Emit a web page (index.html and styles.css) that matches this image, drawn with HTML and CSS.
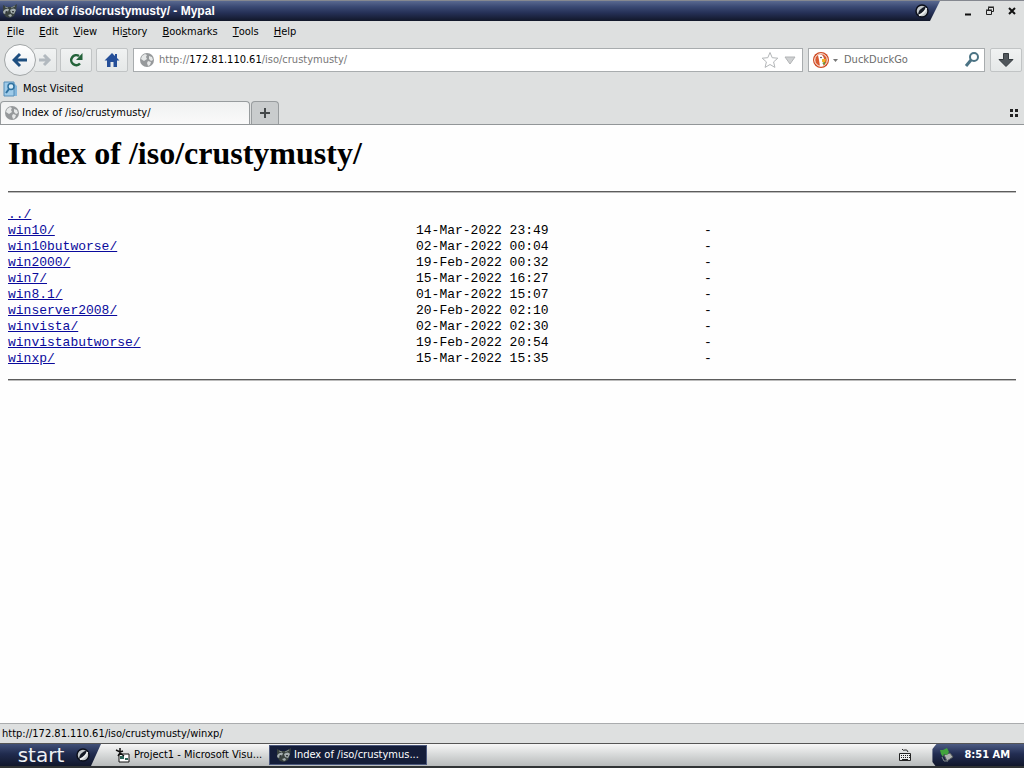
FILE: index.html
```html
<!DOCTYPE html>
<html lang="en">
<head>
<meta charset="utf-8">
<title>Index of /iso/crustymusty/ - Mypal</title>
<link rel="stylesheet" href="styles.css">
</head>
<body>
<svg width="0" height="0" class="defs" aria-hidden="true">
  <defs>
    <symbol id="globe" viewBox="0 0 16 16">
      <circle cx="8" cy="8" r="7" fill="#96999b"/>
      <path d="M3 4l3-2 2 1-1 2 1 2-3 2-3-2zM10 4l3 1 1 3-2 1-2-2zM9 9l3 1-1 3-2 1-1-3z" fill="#e6e8e8"/>
    </symbol>
    <symbol id="raccoon" viewBox="0 0 16 16">
      <path d="M1 2l4 2h5l5-3-1 7-2 5-4 2-4-1-3-4z" fill="#39423f"/>
      <path d="M1 9q2-4 6-3l-1 3-4 2zM8 7q4-3 6 0l-2 4-3-1zM6 12l3-1 1 2-2 1z" fill="#a5aeb0"/>
      <path d="M3 9l2-1 1 1-2 1zM10 8l2 0-1 2z" fill="#15191b"/>
      <path d="M3 4l3 1M9 5l4-2" stroke="#87928f"/>
    </symbol>
    <symbol id="orb" viewBox="0 0 16 16">
      <circle cx="8" cy="8" r="6" fill="#c3c8cb" stroke="#0b0f1a" stroke-width="1.500"/>
      <path d="M4 12Q4 6 12 3 11 9 4 12" fill="#151a25"/>
      <path d="M5 12.500Q11 10 12.500 5" fill="none" stroke="#eef0f0" stroke-width="1.500"/>
    </symbol>
  </defs>
</svg>
<div class="desktop">
  <header class="titlebar">
    <div class="caption">
      <svg class="icon"><use href="#raccoon"/></svg>
      <span class="caption-text">Index of /iso/crustymusty/ - Mypal</span>
      <svg class="icon"><use href="#orb"/></svg>
    </div>
    <div class="window-buttons">
      <button aria-label="Minimize"><svg viewBox="0 0 12 12"><path d="M3 9.500h6" stroke="#111" stroke-width="2"/></svg></button>
      <button aria-label="Restore"><svg viewBox="0 0 12 12" fill="none" stroke="#222"><path d="M4.500 5V2.500h5v4H8M4 2h6"/><path d="M2.500 5.500h5v4h-5zM2 5h6"/></svg></button>
      <button aria-label="Close"><svg viewBox="0 0 12 12"><path d="M3 3l6 6M9 3L3 9" stroke="#111" stroke-width="2"/></svg></button>
    </div>
  </header>
  <nav class="menubar" aria-label="Menu">
    <button><u>F</u>ile</button><button><u>E</u>dit</button><button><u>V</u>iew</button><button>Hi<u>s</u>tory</button><button><u>B</u>ookmarks</button><button><u>T</u>ools</button><button><u>H</u>elp</button>
  </nav>
  <div class="toolbar">
    <div class="history">
      <button class="back" aria-label="Back"><svg viewBox="0 0 16 16"><path d="M8 2L2 8l6 6M3 8h12" fill="none" stroke="#1d4e7f" stroke-width="3"/></svg></button>
      <button class="forward" aria-label="Forward" disabled><svg viewBox="0 0 16 16"><path d="M7 3l5 5-5 5M2 8h9" fill="none" stroke="#b2b9bf" stroke-width="3"/></svg></button>
    </div>
    <button class="tool" aria-label="Reload"><svg viewBox="0 0 16 16"><path d="M12 11.500A5 5 0 1 1 11 4" fill="none" stroke="#24633a" stroke-width="2.500"/><path d="M14.500 1v7H8z" fill="#24633a"/></svg></button>
    <button class="tool" aria-label="Home"><svg viewBox="0 0 16 16"><path d="M8 1L0.500 8.500H3V15h3.500v-5h3v5H13V8.500h2.500L13 6V2h-2v2z" fill="#254f99"/></svg></button>
    <div class="field address">
      <svg class="icon"><use href="#globe"/></svg>
      <div class="url" role="textbox" contenteditable="true" spellcheck="false" aria-label="Address">http://<b>172.81.110.61</b>/iso/crustymusty/</div>
      <button aria-label="Bookmark this page"><svg viewBox="0 0 18 18"><path d="M9 1.500l2.200 5.200 5.600.5-4.200 3.700 1.300 5.500L9 13.500l-4.900 2.900 1.300-5.500L1.200 7.200l5.600-.5z" fill="#fff" stroke="#b3b6b8"/></svg></button>
      <button aria-label="Show history"><svg viewBox="0 0 18 18"><path d="M4 6h10l-5 7z" fill="#cfd1d2" stroke="#b2b4b6"/></svg></button>
    </div>
    <div class="field search">
      <button class="engine" aria-label="Search engine"><svg viewBox="0 0 26 18"><circle cx="9" cy="9" r="8" fill="#cf4a22"/><circle cx="9" cy="9" r="6.300" fill="#d95b32" stroke="#fff"/><path d="M6 4q5-2 6 4l-1 7-3 0-1-6z" fill="#fff"/><path d="M10 8h4l-1 3h-3z" fill="#f0b324"/><path d="M10 12l3-1v3z" fill="#5b9d3d"/><circle cx="9" cy="6.500" r=".8" fill="#234"/><path d="M21 8h5l-2.500 3z" fill="#777"/></svg></button>
      <input type="text" placeholder="DuckDuckGo" aria-label="Search">
      <button aria-label="Go"><svg viewBox="0 0 18 18" fill="none" stroke="#4b7384"><circle cx="11" cy="6" r="4" stroke-width="2"/><path d="M8 9l-5 6" stroke-width="3"/></svg></button>
    </div>
    <button class="tool" aria-label="Downloads"><svg viewBox="0 0 16 16"><path d="M5.500 1.500h5v6H15l-7 7-7-7h4.500z" fill="#50565b" stroke="#343a3e"/></svg></button>
  </div>
  <div class="bookmarks">
    <button><svg class="icon" viewBox="0 0 16 16"><path d="M2 2h9l3 3v10H2z" fill="#84b7dc"/><path d="M1 1h10v14H1z" fill="#9fcbe9" stroke="#568eb7"/><circle cx="8" cy="5.500" r="3" fill="#d6ecf9" stroke="#2e719f" stroke-width="1.500"/><path d="M6 8l-3 4" stroke="#2e719f" stroke-width="2"/></svg>Most Visited</button>
  </div>
  <div class="tabs">
    <button class="tab"><svg class="icon"><use href="#globe"/></svg>Index of /iso/crustymusty/</button>
    <button class="new-tab" aria-label="New tab"><svg viewBox="0 0 12 12"><path d="M6 1v10M1 6h10" stroke="#44484a" stroke-width="2"/></svg></button>
    <button class="tab-groups" aria-label="Tab groups"><svg viewBox="0 0 10 10"><path d="M1 1h3v3H1zM6 1h3v3H6zM1 6h3v3H1zM6 6h3v3H6z" fill="#222"/></svg></button>
  </div>
  <main class="page">
    <h1>Index of /iso/crustymusty/</h1>
    <hr>
    <table>
      <colgroup><col class="col-name"><col class="col-date"><col></colgroup>
      <tbody>
      <tr><td><a href="#">../</a></td><td></td><td></td></tr>
      <tr><td><a href="#">win10/</a></td><td>14-Mar-2022 23:49</td><td>-</td></tr>
      <tr><td><a href="#">win10butworse/</a></td><td>02-Mar-2022 00:04</td><td>-</td></tr>
      <tr><td><a href="#">win2000/</a></td><td>19-Feb-2022 00:32</td><td>-</td></tr>
      <tr><td><a href="#">win7/</a></td><td>15-Mar-2022 16:27</td><td>-</td></tr>
      <tr><td><a href="#">win8.1/</a></td><td>01-Mar-2022 15:07</td><td>-</td></tr>
      <tr><td><a href="#">winserver2008/</a></td><td>20-Feb-2022 02:10</td><td>-</td></tr>
      <tr><td><a href="#">winvista/</a></td><td>02-Mar-2022 02:30</td><td>-</td></tr>
      <tr><td><a href="#">winvistabutworse/</a></td><td>19-Feb-2022 20:54</td><td>-</td></tr>
      <tr><td><a href="#">winxp/</a></td><td>15-Mar-2022 15:35</td><td>-</td></tr>
      </tbody>
    </table>
    <hr>
  </main>
  <div class="status">http://172.81.110.61/iso/crustymusty/winxp/</div>
  <footer class="taskbar">
    <button class="start"><span>start</span><svg class="icon"><use href="#orb"/></svg></button>
    <button class="task"><svg class="icon" viewBox="0 0 16 16"><path d="M4 7h10v8H4z" fill="#fff" stroke="#111"/><path d="M5 9h4v3H5zM10 11h3v2h-3z" fill="#2b6558"/><path d="M1 3l4 2 3-1M5 1v5l-2 3M5 6l4 3" fill="none" stroke="#111" stroke-width="1.500"/></svg><span>Project1 - Microsoft Visu...</span></button>
    <button class="task active"><svg class="icon"><use href="#raccoon"/></svg><span>Index of /iso/crustymus...</span></button>
    <button class="keyboard" aria-label="Keyboard layout"><svg viewBox="0 0 14 14"><path d="M4 1q1 2 3 1t3 2" fill="none" stroke="#222"/><path d="M1.500 5.500h11v7h-11z" fill="#eee" stroke="#222"/><path d="M3 7.500h9M3 9.500h9" stroke="#222" stroke-dasharray="1 1"/><path d="M4 11.500h6" stroke="#222"/></svg></button>
    <div class="tray">
      <svg class="icon" viewBox="0 0 16 16"><path d="M6 8l6-2 3 4-6 4z" fill="#aeb3b0" stroke="#555b5d"/><path d="M2 3l3 0 4-2 2 4-2 3-3-1-1 3-2-3z" fill="#42a43c"/><path d="M4 10l2 4 4 0" fill="none" stroke="#868d8e"/></svg>
      <time>8:51 AM</time>
    </div>
  </footer>
</div>
</body>
</html>
```

FILE: styles.css
```css
* { box-sizing: border-box; }
body {
  margin: 0;
  font: 11px/14px "DejaVu Sans Condensed", "DejaVu Sans", "Noto Sans", sans-serif;
  color: #000;
}
button {
  display: flex;
  align-items: center;
  justify-content: center;
  padding: 0;
  border: 0;
  background: none;
  font: inherit;
  color: inherit;
}
svg { display: block; flex: none; }
.defs { position: absolute; }
.icon { width: 16px; height: 16px; }
.desktop {
  display: flex;
  flex-direction: column;
  min-height: 100vh;
  background: #dee0e0;
}
.titlebar { display: flex; height: 21px; border-top: 1px solid #858890; }
.caption {
  flex: 1;
  display: flex;
  align-items: center;
  gap: 4px;
  padding: 0 10px 0 2px;
  background: linear-gradient(#596990, #394872 30%, #253056 60%, #111729);
  clip-path: polygon(0 0, 100% 0, calc(100% - 10px) 100%, 0 100%);
  color: #fff;
}
.caption-text { flex: 1; font: bold 12px/16px "Liberation Sans", Arial, sans-serif; }
.window-buttons { display: flex; align-items: center; gap: 10px; padding: 0 6px 0 22px; }
.window-buttons svg { width: 12px; height: 12px; }
.menubar { display: flex; gap: 15px; height: 21px; padding: 0 7px; }
.toolbar { display: flex; align-items: center; gap: 5px; height: 35px; padding: 0 2px 0 4px; }
.history { display: flex; align-items: center; }
.back {
  position: relative;
  width: 32px;
  height: 32px;
  border: 1px solid #a2a6a7;
  border-radius: 50%;
  background: linear-gradient(#fff, #e9ecee);
}
.back svg, .forward svg, .tool svg { width: 16px; height: 16px; }
.forward, .tool {
  height: 24px;
  border: 1px solid #c1c4c5;
  border-radius: 2px;
  background: linear-gradient(#f0f2f2, #e5e8e8);
}
.forward { width: 23px; margin-left: -2px; border-left: 0; }
.tool { width: 32px; }
.history + .tool { margin-left: -2px; }
.tool + .tool { margin-left: -1px; }
.field {
  display: flex;
  align-items: center;
  gap: 2px;
  height: 24px;
  padding: 0 3px;
  border: 1px solid #a8acae;
  background: #fff;
}
.field button svg { width: 18px; height: 18px; }
.address { flex: 1; padding-left: 5px; }
.url { flex: 1; padding-left: 2px; color: #777; outline: 0; }
.url b { font-weight: normal; color: #000; }
.search { flex: 0 0 177px; }
.field .engine svg { width: 26px; }
.search input {
  flex: 1;
  width: 0;
  min-width: 0;
  padding: 0 4px;
  border: 0;
  background: none;
  font: inherit;
  outline: 0;
}
.search input::placeholder { color: #6c6c6c; opacity: 1; }
.bookmarks { display: flex; align-items: center; height: 24px; padding: 0 3px; }
.bookmarks button { gap: 4px; }
.tabs { display: flex; gap: 1px; height: 24px; border-bottom: 1px solid #929698; }
.tab {
  width: 250px;
  justify-content: flex-start;
  gap: 2px;
  padding-left: 3px;
  border: 1px solid #989c9e;
  border-bottom: 0;
  border-radius: 4px 4px 0 0;
  background: linear-gradient(#f0f1f1, #fafafa);
}
.new-tab {
  width: 28px;
  border: 1px solid #989c9e;
  border-bottom: 0;
  border-radius: 4px 4px 0 0;
  background: #c9cccd;
}
.new-tab svg { width: 12px; height: 12px; }
.tab-groups { margin-left: auto; padding: 0 5px; }
.tab-groups svg { width: 10px; height: 10px; }
.page {
  flex: 1;
  padding: 10px 8px 0;
  background: #fefefe;
  font-family: "Liberation Serif", "Times New Roman", serif;
}
h1 { margin: 0 0 19px; font-size: 32px; line-height: 37px; }
hr { height: 2px; margin: 0; border: 0; border-top: 1px solid #5c5c5c; border-bottom: 1px solid #bcbcbc; }
table {
  width: 100%;
  margin: 14px 0 12px;
  table-layout: fixed;
  border-collapse: collapse;
  font: 13px/16px "Liberation Mono", "Courier New", monospace;
}
td { padding: 0; }
.col-name { width: 408px; }
.col-date { width: 288px; }
td a { color: #0a0a9c; }
.status { height: 20px; padding: 3px 2px; border-top: 1px solid #aaacae; }
.taskbar {
  display: flex;
  align-items: center;
  height: 25px;
  border-top: 1px solid #555;
  border-bottom: 2px solid #303334;
  background: linear-gradient(#f7f7f7, #d6d8d8 50%, #b8bbbb);
}
.start {
  height: 100%;
  gap: 6px;
  padding: 0 10px 0 13px;
  margin-right: 10px;
  background: linear-gradient(#415078, #202b4e 45%, #11172b);
  clip-path: polygon(0 0, 100% 0, calc(100% - 10px) 100%, 0 100%);
  color: #eef0f4;
  font: 20px/20px "DejaVu Sans", sans-serif;
}
.start span { width: 56px; }
.task { width: 158px; height: 20px; justify-content: flex-start; gap: 3px; padding: 0 4px; white-space: nowrap; }
.task.active { gap: 2px; padding: 0 4px 0 6px; border: 1px solid #4a577c; background: #141d39; color: #fff; }
.keyboard { margin-left: auto; margin-right: 20px; }
.keyboard svg { width: 14px; height: 14px; }
.tray {
  display: flex;
  align-items: center;
  gap: 10px;
  height: 100%;
  padding: 0 14px 0 6px;
  background: linear-gradient(#4c5b83, #222d52 45%, #11172b);
  clip-path: polygon(4px 0, 100% 0, 100% 100%, 3px 100%, 0 18px, 0 5px);
  color: #fff;
  font-weight: bold;
}
```
